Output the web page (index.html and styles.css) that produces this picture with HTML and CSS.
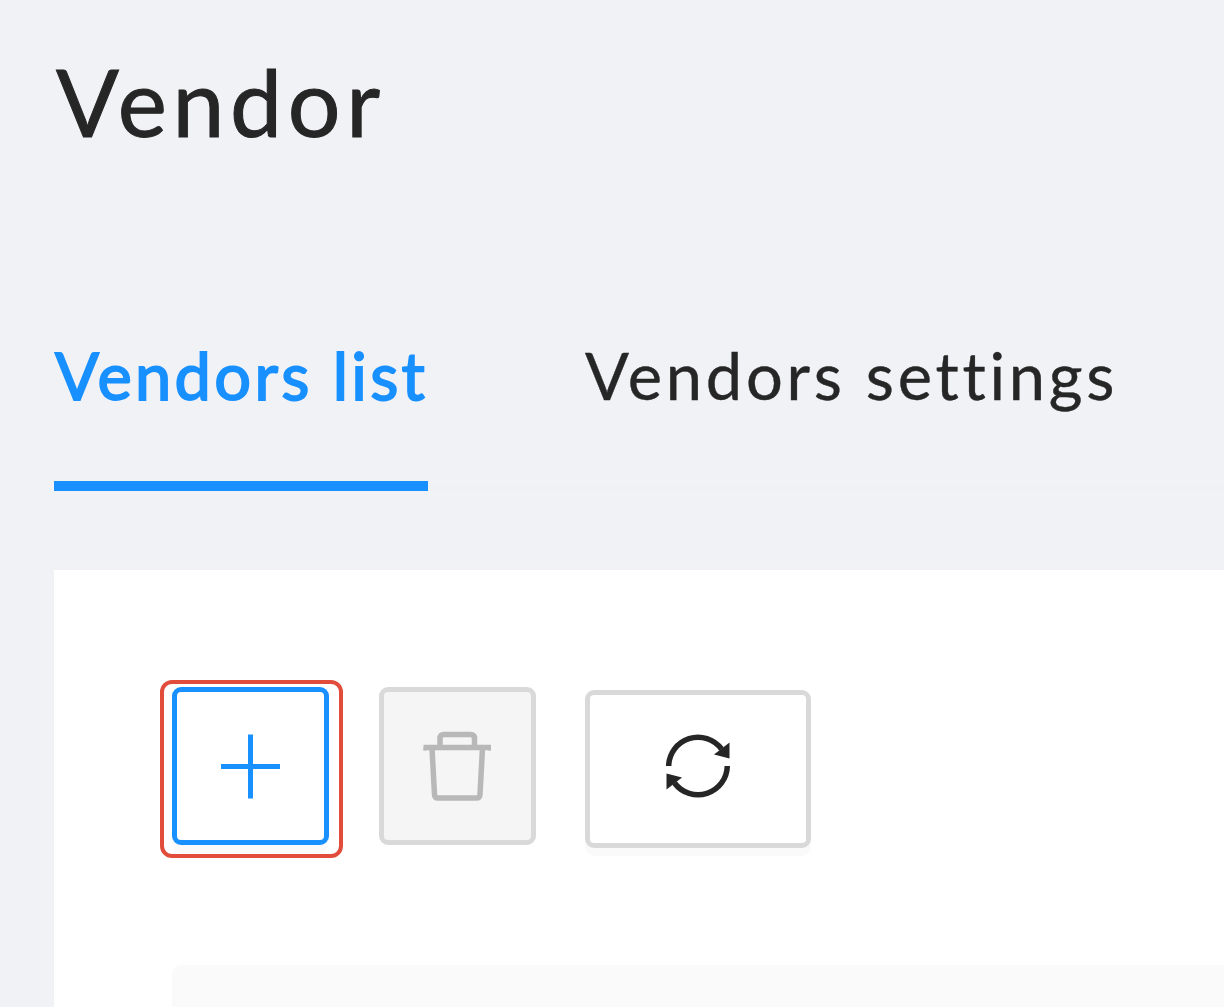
FILE: index.html
```html
<!DOCTYPE html>
<html lang="en">
<head>
<meta charset="utf-8">
<title>Vendor</title>
<link rel="stylesheet" href="styles.css">
</head>
<body>
<main class="page">
  <h1 class="title">Vendor</h1>
  <nav class="tabs">
    <a class="tab tab-active">Vendors list</a>
    <a class="tab">Vendors settings</a>
  </nav>
  <section class="panel">
    <div class="toolbar">
      <button class="btn btn-add" aria-label="Add">
        <svg class="icon" viewBox="0 0 80 80"><path d="M39.500 8.500V72.500M10 40.500H69" fill="none" stroke="currentColor" stroke-width="5"/></svg>
      </button>
      <button class="btn btn-delete" aria-label="Delete" disabled>
        <svg class="icon" viewBox="0 0 80 80"><g fill="none" stroke="currentColor" stroke-width="5.500"><path d="M5.500 21.500H73"/><path d="M7 21.500V24.500M71.500 21.500V24.500" stroke-width="3"/><path d="M22 20V12.500Q22 8.500 26 8.500H52.500Q56.500 8.500 56.500 12.500V20"/><path d="M14 22L16.500 68.500Q16.700 72 20 72H58.500Q61.800 72 62 68.500L64.500 22"/></g></svg>
      </button>
      <button class="btn btn-refresh" aria-label="Refresh">
        <svg class="icon" viewBox="0 0 80 80"><path d="M10.700 37A29.300 29.300 0 0 1 63.500 20M69.300 37A29.300 29.300 0 0 1 16.500 54" fill="none" stroke="currentColor" stroke-width="5.500"/><path d="M71.500 13.500V29.500L56 25.500ZM8.500 44.500V60.500L24 48.500Z" fill="currentColor"/></svg>
      </button>
    </div>
    <div class="table-head"></div>
  </section>
</main>
</body>
</html>
```
FILE: styles.css
```css
* { box-sizing: border-box; }
body {
  margin: 0;
  background: #f0f2f6;
  color: #262626;
  font-family: Lato, "Open Sans", sans-serif;
}
.page {
  height: 1007px;
  padding: 45px 0 0 54px;
  overflow: hidden;
  display: flex;
  flex-direction: column;
}
.title {
  flex: none;
  margin: 0 0 0 2px;
  height: 115px;
  font-size: 93px;
  line-height: 112px;
  font-weight: 400;
  letter-spacing: 5.7px;
  -webkit-text-stroke: 1px #262626;
}
.tabs {
  flex: none;
  display: flex;
  gap: 157px;
  height: 331px;
  padding-top: 177px;
  border-bottom: 5px solid #f0f1f2;
}
.tab {
  height: 154px;
  flex: none;
  font-size: 65px;
  line-height: 77px;
  letter-spacing: 3.7px;
  white-space: nowrap;
  -webkit-text-stroke: 0.4px currentColor;
}
.tab-active {
  width: 374px;
  padding-left: 1px;
  color: #1890ff;
  letter-spacing: 3.3px;
  -webkit-text-stroke-width: 1.8px;
  border-bottom: 10px solid #1890ff;
}
.panel {
  flex: 1;
  margin-top: 79px;
  padding: 117px 0 0 118px;
  background: #fff;
}
.toolbar {
  display: flex;
  align-items: flex-start;
  height: 278px;
}
.btn {
  width: 157px;
  height: 158px;
  margin: 0;
  padding: 0;
  display: flex;
  align-items: center;
  justify-content: center;
  border: 5px solid #d9d9d9;
  border-radius: 9px;
  background: #fff;
  color: #262626;
  box-shadow: 0 8px 0 #fafafa;
}
.btn-add {
  position: relative;
  border-color: #1890ff;
  color: #1890ff;
}
/* Highlight frame around the add button */
.btn-add::after {
  content: "";
  position: absolute;
  inset: -12px -19px -18px -17px;
  border: 4px solid #e24c3b;
  border-radius: 12px;
}
.btn-delete {
  margin-left: 50px;
  background: #f5f5f5;
  color: #b8b8b8;
  box-shadow: none;
}
.btn-refresh {
  width: 226px;
  margin: 3px 0 0 49px;
}
.icon { width: 80px; height: 80px; flex: none; }
.table-head {
  height: 42px;
  border-radius: 9px 0 0 0;
  background: #fafafa;
}
```
